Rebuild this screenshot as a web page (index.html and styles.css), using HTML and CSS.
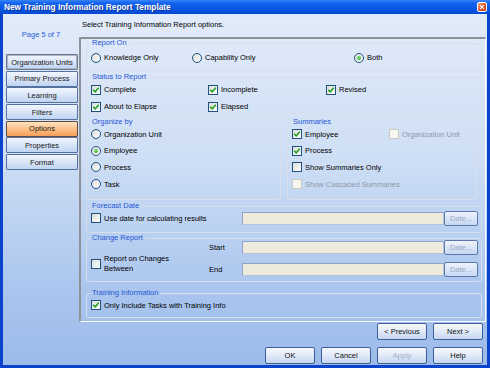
FILE: index.html
```html
<!DOCTYPE html>
<html>
<head>
<meta charset="utf-8">
<link rel="stylesheet" href="styles.css">
</head>
<body>
<div class="win">
  <div class="titlebar">
    <span class="title">New Training Information Report Template</span>
    <span class="close"><svg width="8" height="8" viewBox="0 0 8 8"><path d="M1.5 1.5 L6.5 6.5 M6.5 1.5 L1.5 6.5" stroke="#fff" stroke-width="1.5"/></svg></span>
  </div>
  <div class="body">
    <aside class="side">
      <div class="page">Page 5 of 7</div>
      <nav class="nav">
        <div class="navbtn focus">Organization Units</div>
        <div class="navbtn">Primary Process</div>
        <div class="navbtn">Learning</div>
        <div class="navbtn">Filters</div>
        <div class="navbtn active">Options</div>
        <div class="navbtn">Properties</div>
        <div class="navbtn">Format</div>
      </nav>
    </aside>
    <main class="main">
      <div class="header">Select Training Information Report options.</div>
      <div class="panel">
        <fieldset class="f1">
          <legend>Report On</legend>
          <div class="radios">
            <label class="opt w101"><span class="rb"></span>Knowledge Only</label>
            <label class="opt w162"><span class="rb"></span>Capability Only</label>
            <label class="opt"><span class="rb on"></span>Both</label>
          </div>
        </fieldset>
        <fieldset class="f2">
          <legend>Status to Report</legend>
          <div class="status">
            <label class="opt"><span class="cb"><svg width="8" height="8" viewBox="0 0 8 8"><path d="M1.2 3.8 L3.2 5.8 L6.8 1.8" fill="none" stroke="#21a121" stroke-width="1.6"/></svg></span>Complete</label>
            <label class="opt"><span class="cb"><svg width="8" height="8" viewBox="0 0 8 8"><path d="M1.2 3.8 L3.2 5.8 L6.8 1.8" fill="none" stroke="#21a121" stroke-width="1.6"/></svg></span>Incomplete</label>
            <label class="opt"><span class="cb"><svg width="8" height="8" viewBox="0 0 8 8"><path d="M1.2 3.8 L3.2 5.8 L6.8 1.8" fill="none" stroke="#21a121" stroke-width="1.6"/></svg></span>Revised</label>
            <label class="opt"><span class="cb"><svg width="8" height="8" viewBox="0 0 8 8"><path d="M1.2 3.8 L3.2 5.8 L6.8 1.8" fill="none" stroke="#21a121" stroke-width="1.6"/></svg></span>About to Elapse</label>
            <label class="opt"><span class="cb"><svg width="8" height="8" viewBox="0 0 8 8"><path d="M1.2 3.8 L3.2 5.8 L6.8 1.8" fill="none" stroke="#21a121" stroke-width="1.6"/></svg></span>Elapsed</label>
          </div>
        </fieldset>
        <div class="row3">
          <fieldset class="f3a">
            <legend>Organize by</legend>
            <div class="list">
              <label class="opt row"><span class="rb"></span>Organization Unit</label>
              <label class="opt row"><span class="rb on"></span>Employee</label>
              <label class="opt row"><span class="rb"></span>Process</label>
              <label class="opt row"><span class="rb"></span>Task</label>
            </div>
          </fieldset>
          <fieldset class="f3b">
            <legend>Summaries</legend>
            <div class="sums">
              <label class="opt row"><span class="cb"><svg width="8" height="8" viewBox="0 0 8 8"><path d="M1.2 3.8 L3.2 5.8 L6.8 1.8" fill="none" stroke="#21a121" stroke-width="1.6"/></svg></span>Employee</label>
              <label class="opt row dis"><span class="cb"></span>Organization Unit</label>
              <label class="opt row"><span class="cb"><svg width="8" height="8" viewBox="0 0 8 8"><path d="M1.2 3.8 L3.2 5.8 L6.8 1.8" fill="none" stroke="#21a121" stroke-width="1.6"/></svg></span>Process</label>
              <span class="row"></span>
              <label class="opt row span2"><span class="cb"></span>Show Summaries Only</label>
              <label class="opt row span2 dis"><span class="cb"></span>Show Cascaded Summaries</label>
            </div>
          </fieldset>
        </div>
        <fieldset class="f4">
          <legend>Forecast Date</legend>
          <div class="fline">
            <label class="opt w151"><span class="cb"></span>Use date for calculating results</label>
            <span class="input"></span>
            <span class="datebtn">Date...</span>
          </div>
        </fieldset>
        <fieldset class="f5">
          <legend>Change Report</legend>
          <div class="change">
            <label class="opt two w118"><span class="cb"></span><span class="lines">Report on Changes<br>Between</span></label>
            <div class="dates">
              <span class="dlabel">Start</span><span class="input"></span><span class="datebtn">Date...</span>
              <span class="dlabel">End</span><span class="input"></span><span class="datebtn">Date...</span>
            </div>
          </div>
        </fieldset>
        <fieldset class="f6">
          <legend>Training Information</legend>
          <label class="opt tline"><span class="cb"><svg width="8" height="8" viewBox="0 0 8 8"><path d="M1.2 3.8 L3.2 5.8 L6.8 1.8" fill="none" stroke="#21a121" stroke-width="1.6"/></svg></span>Only Include Tasks with Training Info</label>
        </fieldset>
      </div>
      <div class="btnrow r1">
        <div class="btn">&lt; Previous</div>
        <div class="btn">Next &gt;</div>
      </div>
      <div class="btnrow r2">
        <div class="btn">OK</div>
        <div class="btn">Cancel</div>
        <div class="btn disabled">Apply</div>
        <div class="btn">Help</div>
      </div>
    </main>
  </div>
</div>
</body>
</html>
```
FILE: styles.css
```css
html, body { margin: 0; padding: 0; }
body {
  font-family: "Liberation Sans", Arial, sans-serif;
  font-size: 7.5px;
  color: #000;
  background: #fff;
}
.win {
  width: 490px;
  height: 368px;
  display: flex;
  flex-direction: column;
  background: #0a44cc;
}
.titlebar {
  height: 14px;
  flex: none;
  display: flex;
  align-items: center;
  justify-content: space-between;
  padding: 0 3px 0 4px;
  background: linear-gradient(#3a86f8 0%, #1665f0 20%, #0a58e6 60%, #0649d2 100%);
}
.title {
  color: #fff;
  font-weight: bold;
  font-size: 8.3px;
  text-shadow: 1px 1px 0 #0d2f8a;
  line-height: 10px;
}
.close {
  width: 10px;
  height: 10px;
  box-sizing: border-box;
  border: 1px solid #fff;
  border-radius: 2px;
  background: linear-gradient(135deg, #f3a68a, #e2592f 50%, #c8421c);
  display: flex;
  align-items: center;
  justify-content: center;
}
.close svg { width: 6px; height: 6px; }
.body {
  flex: 1;
  display: flex;
  margin: 0 3px 3px;
  background: linear-gradient(#e2ebf9 0%, #cfdff5 40%, #a9c5ee 80%, #9dbbea 100%);
}
.side {
  width: 76px;
  flex: none;
  display: flex;
  flex-direction: column;
}
.page {
  color: #2a5cd8;
  text-align: center;
  line-height: 9px;
  margin-top: 15.5px;
}
.nav {
  margin: 15.5px 0 0 3px;
  display: flex;
  flex-direction: column;
  gap: 0.7px;
}
.navbtn {
  width: 72px;
  height: 16px;
  box-sizing: border-box;
  border: 1px solid #55719f;
  border-radius: 1px;
  background: linear-gradient(#f2f6fd, #d9e5f8 50%, #c0d4f1);
  display: flex;
  align-items: center;
  justify-content: center;
  color: #202020;
}
.navbtn.focus {
  border-color: #6b778c;
  box-shadow: inset 0 0 0 1px #aab6ca;
}
.navbtn.active {
  background: linear-gradient(#ffe3c2, #fcc088 50%, #f6a058);
  border-color: #5e4b42;
}
.main {
  flex: 1;
  display: flex;
  flex-direction: column;
  min-width: 0;
}
.header {
  height: 23px;
  box-sizing: border-box;
  padding: 6px 0 0 3px;
  line-height: 9px;
}
.panel {
  height: 285px;
  box-sizing: border-box;
  margin-right: 1px;
  border-top: 2px solid #8d9299;
  border-left: 2px solid #8d9299;
  border-right: 1px solid #f8fbff;
  border-bottom: 1px solid #f8fbff;
  padding: 0 3px 0 5px;
  display: flex;
  flex-direction: column;
}
fieldset {
  margin: 0;
  padding: 0 0 0 4px;
  border: 1px solid #d6dfeb;
  border-radius: 3px;
  min-width: 0;
  box-sizing: border-box;
}
legend {
  padding: 0 2px;
  margin-left: -1px;
  line-height: 8px;
  color: #2456d6;
}
.f1 { height: 32px; }
.f2 { height: 40px; margin-top: 2px; }
.row3 { display: flex; gap: 6px; margin-top: 5px; height: 82px; }
.f3a { width: 195px; height: 82px; }
.f3b { width: 190px; height: 82px; }
.f4 { height: 31px; margin-top: 2px; }
.f5 { height: 48px; margin-top: 1px; }
.f6 { height: 29px; margin-top: 7px; }

.opt {
  display: flex;
  align-items: center;
  gap: 3px;
  height: 17px;
  white-space: nowrap;
}
.w101 { width: 101px; }
.w162 { width: 162px; }
.w151 { width: 151px; flex: none; }
.w118 { width: 118px; flex: none; }
.radios { display: flex; padding-top: 2px; }
.status {
  display: grid;
  grid-template-columns: 117px 118px auto;
}
.list { display: flex; flex-direction: column; }
.row { height: 16.6px; }
.sums {
  display: grid;
  grid-template-columns: 97px auto;
}
.span2 { grid-column: span 2; }
.dis { color: #8f99a8; }
.cb {
  width: 10px;
  height: 10px;
  box-sizing: border-box;
  border: 1px solid #1c5180;
  background: linear-gradient(135deg, #dcdcd7, #ffffff);
  flex: none;
  display: flex;
  align-items: center;
  justify-content: center;
}
.dis .cb {
  border-color: #cbcabd;
  background: #f6f6f3;
}
.rb {
  width: 10px;
  height: 10px;
  box-sizing: border-box;
  border-radius: 50%;
  border: 1px solid #1c5180;
  background: linear-gradient(135deg, #dcdcd7, #ffffff);
  flex: none;
  display: flex;
  align-items: center;
  justify-content: center;
}
.rb.on::after {
  content: "";
  width: 4px;
  height: 4px;
  border-radius: 50%;
  background: radial-gradient(circle at 40% 35%, #7be27b, #21a121);
}
.fline {
  display: flex;
  align-items: center;
  height: 16px;
}
.input {
  width: 202px;
  height: 13px;
  box-sizing: border-box;
  background: #eeebdc;
  border: 1px solid #b3c3dc;
  border-top-color: #8fa4c8;
  border-left-color: #8fa4c8;
  flex: none;
}
.datebtn {
  width: 34px;
  height: 15px;
  box-sizing: border-box;
  border: 1px solid #5a78aa;
  border-radius: 2px;
  background: linear-gradient(#eef3fc, #c6d8f3);
  color: #9aabc8;
  display: flex;
  align-items: center;
  justify-content: center;
  flex: none;
}
.change { display: flex; }
.two { height: auto; margin-top: 12px; align-self: flex-start; }
.lines { line-height: 9.5px; }
.dates {
  display: grid;
  grid-template-columns: 33px 202px 34px;
  grid-template-rows: 15px 15px;
  row-gap: 7px;
  align-items: center;
  margin-top: -2px;
}
.tline { height: 16px; }
.btnrow {
  display: flex;
  justify-content: flex-end;
  gap: 6px;
  padding-right: 4px;
}
.r1 { margin-top: 1px; }
.r2 { margin-top: 7px; }
.btn {
  width: 50px;
  height: 17px;
  box-sizing: border-box;
  border: 1px solid #3d5f98;
  border-radius: 2px;
  background: linear-gradient(#f6f9fe, #dfe8f7 55%, #c6d6f0);
  display: flex;
  align-items: center;
  justify-content: center;
  color: #111;
}
.btn.disabled { color: #a2b0c6; }
```
